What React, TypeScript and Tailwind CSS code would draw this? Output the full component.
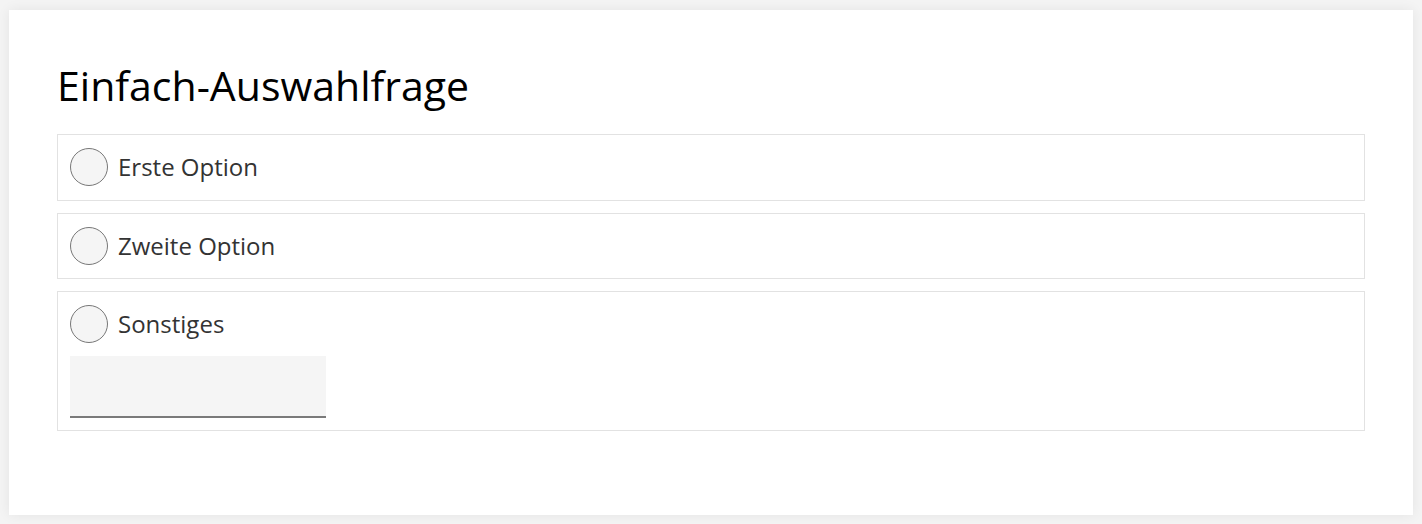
import React from "react";

function Radio() {
  return (
    <span className="block w-[38px] h-[38px] rounded-full border border-[#777] bg-[#f5f5f5] shrink-0" />
  );
}

function Option({ label, children }: { label: string; children?: React.ReactNode }) {
  return (
    <div className={"border border-[#e2e2e2] px-[12px] pt-[12px] " + (children ? "pb-[12px]" : "pb-[12.5px]")}>
      <label className="flex items-center gap-[10px] h-[40px]">
        <Radio />
        <span className="text-[24px] text-[#333] leading-[40px]">{label}</span>
      </label>
      {children}
    </div>
  );
}

export default function App() {
  return (
    <div
      className="min-h-[524px] bg-[#f4f4f4] pt-[10px] pb-[9px] px-[9px]"
      style={{ fontFamily: '"Open Sans", "Noto Sans", sans-serif' }}
    >
      <div className="bg-white shadow-[0_0_12px_rgba(0,0,0,0.07)] pt-[50px] pb-[84px] px-[48px]">
        <h1 className="text-[41px] leading-[50px] text-black font-normal">Einfach-Auswahlfrage</h1>
        <div className="mt-[24px] flex flex-col gap-[12px]">
          <Option label="Erste Option" />
          <Option label="Zweite Option" />
          <Option label="Sonstiges">
            <input
              type="text"
              className="mt-[12px] block w-[256px] h-[62px] bg-[#f5f5f5] border-b-2 border-[#7a7a7a] outline-none px-2"
            />
          </Option>
        </div>
      </div>
    </div>
  );
}
